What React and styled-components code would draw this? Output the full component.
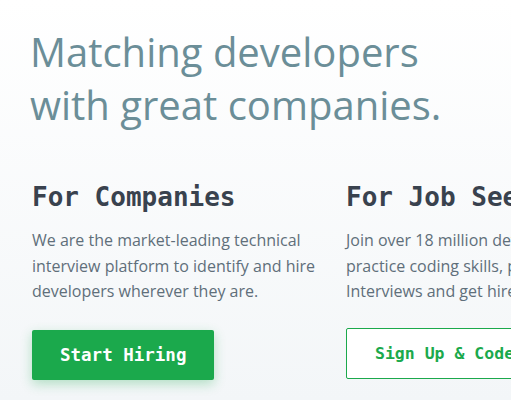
import React from "react";
import styled, { createGlobalStyle } from "styled-components";

const Global = createGlobalStyle`
  html, body { margin: 0; padding: 0; }
  body {
    width: 511px;
    height: 400px;
    overflow: hidden;
    background: linear-gradient(180deg, #ffffff 0%, #f3f6f8 100%);
  }
`;

const Page = styled.main`
  padding: 25px 0 0 30px;
  height: 400px;
  box-sizing: border-box;
  overflow: hidden;
`;

const Title = styled.h1`
  margin: 0;
  font-family: "Open Sans", sans-serif;
  font-weight: 400;
  font-size: 40px;
  line-height: 53px;
  color: #6b8e98;
`;

const Columns = styled.div`
  display: grid;
  grid-template-columns: 290px 290px;
  column-gap: 24px;
  margin-top: 50px;
  padding-left: 2px;
  width: 700px;
`;

const Column = styled.section`
  display: flex;
  flex-direction: column;
  align-items: flex-start;
`;

const Heading = styled.h2`
  margin: 0;
  font-family: "DejaVu Sans Mono", monospace;
  font-weight: 700;
  font-size: 26px;
  line-height: 32px;
  color: #39424e;
`;

const Text = styled.p`
  margin: 15px 0 0;
  font-family: "Open Sans", sans-serif;
  font-size: 16px;
  line-height: 25.5px;
  color: #5f6f7a;
  white-space: nowrap;
`;

const Button = styled.a`
  display: flex;
  align-items: center;
  justify-content: center;
  box-sizing: border-box;
  height: ${(p) => p.$height}px;
  padding: 0 28px;
  margin-top: ${(p) => p.$top}px;
  border-radius: 2px;
  font-family: "DejaVu Sans Mono", monospace;
  font-weight: 700;
  font-size: ${(p) => (p.$primary ? "17.5px" : "16.5px")};
  text-decoration: none;
  white-space: nowrap;
  background: ${(p) => (p.$primary ? "#1ba94c" : "#ffffff")};
  color: ${(p) => (p.$primary ? "#ffffff" : "#1ba94c")};
  border: ${(p) => (p.$primary ? "none" : "1px solid #1ba94c")};
  box-shadow: ${(p) => (p.$primary ? "0 4px 12px rgba(27,169,76,0.3)" : "none")};
`;

export default function App() {
  return (
    <>
      <Global />
      <Page>
        <Title>
          Matching developers
          <br />
          with great companies.
        </Title>
        <Columns>
          <Column>
            <Heading>For Companies</Heading>
            <Text>
              We are the market-leading technical
              <br />
              interview platform to identify and hire
              <br />
              developers wherever they are.
            </Text>
            <Button $primary $height={50} $top={25}>Start Hiring</Button>
          </Column>
          <Column>
            <Heading>For Job Seekers</Heading>
            <Text>
              Join over 18 million developers,
              <br />
              practice coding skills, prepare for
              <br />
              Interviews and get hired.
            </Text>
            <Button $height={51} $top={23}>Sign Up &amp; Code</Button>
          </Column>
        </Columns>
      </Page>
    </>
  );
}
